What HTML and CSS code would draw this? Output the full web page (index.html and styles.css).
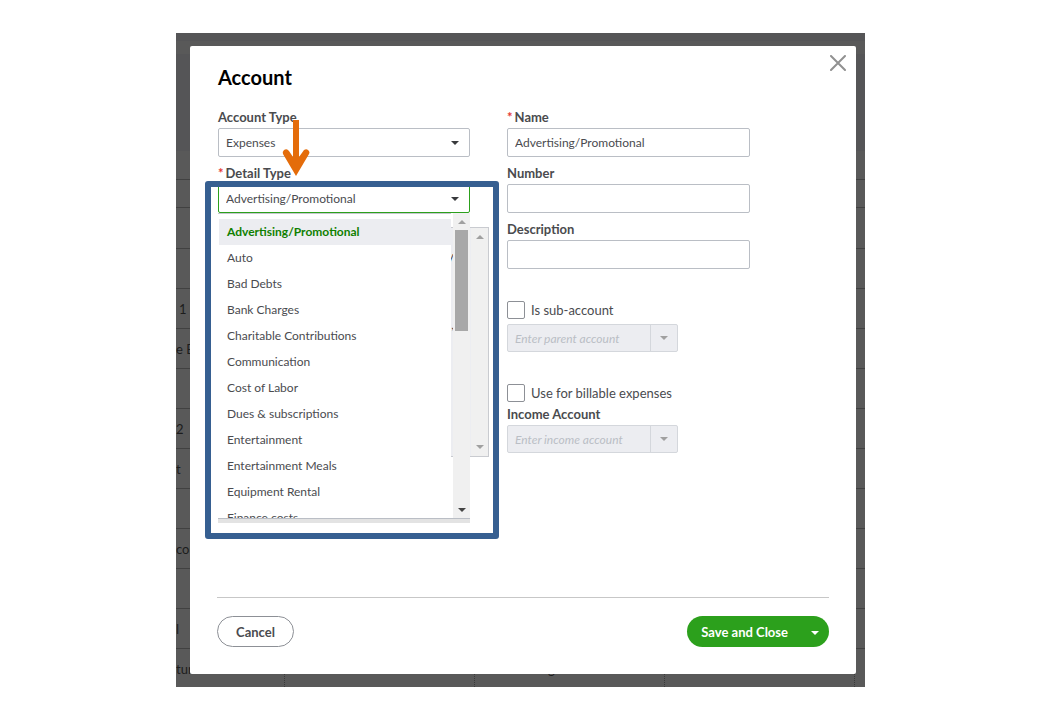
FILE: index.html
```html
<!DOCTYPE html>
<html lang="en">
<head>
    <meta charset="UTF-8">
    <meta name="viewport" content="width=device-width, initial-scale=1.0">
    <title>Account</title>
    <link rel="stylesheet" href="styles.css">
</head>
<body>
    <div class="stage">
        <!-- chart of accounts behind the dialog -->
        <div class="backdrop">
            <div class="backdrop-bar"></div>
            <div class="backdrop-head"></div>
            <table class="accounts">
                <tr class="row-head"><td></td><td></td><td></td><td></td><td></td></tr>
                <tr class="row-filter"><td></td><td></td><td></td><td></td><td></td></tr>
                <tr class="row-first"><td></td><td></td><td></td><td></td><td></td></tr>
                <tr><td></td><td></td><td></td><td></td><td></td></tr>
                <tr><td class="indent">1</td><td></td><td></td><td></td><td></td></tr>
                <tr><td>e B</td><td></td><td></td><td></td><td></td></tr>
                <tr><td></td><td></td><td></td><td></td><td></td></tr>
                <tr><td>2</td><td></td><td></td><td></td><td></td></tr>
                <tr><td>t</td><td></td><td></td><td></td><td></td></tr>
                <tr><td></td><td></td><td></td><td></td><td></td></tr>
                <tr><td>cou</td><td></td><td></td><td></td><td></td></tr>
                <tr><td></td><td></td><td></td><td></td><td></td></tr>
                <tr><td>l</td><td></td><td></td><td></td><td></td></tr>
                <tr><td>tur</td><td></td><td class="type">g</td><td></td><td></td></tr>
            </table>
        </div>

        <form class="dialog">
            <button type="button" class="close" aria-label="Close">
                <svg width="16" height="16" viewBox="0 0 16 16"><path d="M1 1L15 15M15 1L1 15" stroke="#919191" stroke-width="2" stroke-linecap="round"/></svg>
            </button>
            <h1>Account</h1>

            <div class="columns">
                <div class="left">
                    <div class="field">
                        <label for="account-type">Account Type</label>
                        <select id="account-type"><option>Expenses</option></select>
                    </div>
                    <div class="field">
                        <label for="detail-type"><span class="required">*</span>Detail Type</label>
                        <select id="detail-type" class="open"><option>Advertising/Promotional</option></select>
                        <div class="dropdown">
                            <ul class="options">
                                <li class="selected">Advertising/Promotional</li>
                                <li>Auto</li>
                                <li>Bad Debts</li>
                                <li>Bank Charges</li>
                                <li>Charitable Contributions</li>
                                <li>Communication</li>
                                <li>Cost of Labor</li>
                                <li>Dues &amp; subscriptions</li>
                                <li>Entertainment</li>
                                <li>Entertainment Meals</li>
                                <li>Equipment Rental</li>
                                <li>Finance costs</li>
                            </ul>
                            <div class="scrollbar">
                                <span class="arrow up"></span>
                                <span class="thumb"></span>
                                <span class="arrow down dark"></span>
                            </div>
                        </div>
                    </div>
                    <div class="help">
                        <div class="help-text"><p>y</p><p>,</p></div>
                        <div class="scrollbar">
                            <span class="arrow up"></span>
                            <span class="arrow down"></span>
                        </div>
                    </div>

                    <!-- callout frame and arrow -->
                    <div class="callout"></div>
                    <svg class="pointer" width="28" height="56" viewBox="0 0 28 56">
                        <path d="M11 0H17V37L22 30Q25 28 27 31Q28 33 27 34L14 56L1 34Q0 32 2 30Q5 28 7 31L11 37Z" fill="#e46c0a"/>
                    </svg>
                </div>

                <div class="right">
                    <div class="field">
                        <label for="name"><span class="required">*</span>Name</label>
                        <input type="text" id="name" value="Advertising/Promotional">
                    </div>
                    <div class="field">
                        <label for="number">Number</label>
                        <input type="text" id="number">
                    </div>
                    <div class="field">
                        <label for="description">Description</label>
                        <input type="text" id="description">
                    </div>

                    <div class="group">
                        <label class="check"><input type="checkbox">Is sub-account</label>
                        <div class="combo">
                            <input type="text" placeholder="Enter parent account" aria-label="Parent account" disabled>
                            <button type="button" aria-label="Show accounts" disabled><span class="arrow down"></span></button>
                        </div>
                    </div>
                    <div class="group">
                        <label class="check"><input type="checkbox">Use for billable expenses</label>
                        <label class="combo-label" for="income">Income Account</label>
                        <div class="combo">
                            <input type="text" id="income" placeholder="Enter income account" disabled>
                            <button type="button" aria-label="Show income accounts" disabled><span class="arrow down"></span></button>
                        </div>
                    </div>
                </div>
            </div>

            <div class="footer">
                <button type="button" class="cancel">Cancel</button>
                <div class="save">
                    <button type="button" class="save-main">Save and Close</button>
                    <button type="button" class="save-more" aria-label="More save options"><span class="arrow down"></span></button>
                </div>
            </div>
        </form>
    </div>
</body>
</html>
```

FILE: styles.css
```css
* {
    box-sizing: border-box;
}
body {
    margin: 0;
    padding: 33px 175px 33px 176px;
    background-color: #fff;
    font-family: Lato, "Open Sans", sans-serif;
    font-size: 12px;
    color: #4a4b4f;
}
input, select, button {
    font-family: inherit;
    font-size: 12px;
    color: inherit;
}
.stage {
    display: grid;
    grid-template-columns: minmax(0, 1fr);
    background-color: #595959;
}
.backdrop, .dialog {
    grid-area: 1 / 1;
}

/* Page behind */
.backdrop {
    height: 0;
    min-height: 100%;
    overflow: hidden;
}
.backdrop-bar {
    height: 8px;
    background-color: #555557;
}
.backdrop-head {
    height: 97px;
    margin-top: 13px;
    background-color: #555557;
}
.accounts {
    width: 100%;
    table-layout: fixed;
    border-collapse: separate;
    border-spacing: 0;
    color: #1c1c1c;
    font-size: 13px;
}
.accounts td {
    height: 40px;
    padding: 0;
    border-bottom: 1px solid #414141;
    border-right: 1px dotted #3a3a3a;
    width: 190px;
}
.accounts td:first-child {
    width: 109px;
}
.accounts td:last-child {
    width: 10px;
    border-right: none;
}
.accounts .row-head td {
    height: 29px;
}
.accounts .row-filter td {
    height: 28px;
}
.accounts .row-first td {
    height: 41px;
}
.accounts .indent {
    padding-left: 3px;
}
.accounts .type {
    padding-left: 73px;
}
.accounts tr:last-child td {
    border-bottom: none;
}

/* Dialog */
.dialog {
    position: relative;
    margin: 13px 9px 13px 14px;
    padding: 19px 27px 27px;
    background-color: #fff;
    border-radius: 2px;
}
.close {
    position: absolute;
    top: 9px;
    right: 10px;
    padding: 0;
    border: none;
    background: none;
    line-height: 0;
}
h1 {
    margin: 0 0 19px;
    padding-left: 1px;
    font-size: 20px;
    line-height: 24px;
    color: #000;
}
.columns {
    display: grid;
    grid-template-columns: 252fr 322fr;
    gap: 37px;
    padding-left: 1px;
}
.left {
    position: relative;
}
.field {
    position: relative;
    margin-bottom: 7px;
}
.right .field {
    max-width: 243px;
}
.field label, .combo-label {
    display: block;
    margin-bottom: 2px;
    font-size: 13px;
    font-weight: bold;
    line-height: 18px;
    color: #4a4b4e;
}
.required {
    margin-right: 2px;
    color: #e43834;
}
.field input, .field select {
    display: block;
    width: 100%;
    height: 29px;
    padding: 0 7px;
    border: 1px solid #babec5;
    border-radius: 2px;
    background-color: #fff;
}
.field select {
    appearance: none;
    background-image: url("data:image/svg+xml,%3Csvg xmlns='http://www.w3.org/2000/svg' width='8' height='4'%3E%3Cpath d='M0 0H8L4 4Z' fill='%23393a3d'/%3E%3C/svg%3E");
    background-repeat: no-repeat;
    background-position: right 10px center;
}
.field select.open {
    border-color: #2ca01c;
}

/* Triangles */
.arrow {
    width: 0;
    height: 0;
    border: 4px solid transparent;
}
.arrow.up {
    border-top: none;
    border-bottom-color: #a0a0a0;
}
.arrow.down {
    border-bottom: none;
    border-top-color: #a0a0a0;
}
.arrow.dark {
    border-top-color: #444;
}
.scrollbar {
    display: flex;
    flex-direction: column;
    align-items: center;
    width: 17px;
    padding: 7px 0;
    background-color: #f0f0f0;
}
.scrollbar .thumb {
    width: 13px;
    height: 101px;
    margin-top: 6px;
    background-color: #a8a8a8;
}
.scrollbar .down {
    margin-top: auto;
}

/* Open list of detail types */
.dropdown {
    position: absolute;
    top: 100%;
    left: 0;
    right: 0;
    z-index: 1;
    display: flex;
    justify-content: space-between;
    height: 310px;
    border-bottom: 4px solid #e3e3e3;
}
.dropdown::after {
    content: "";
    position: absolute;
    left: 0;
    right: 0;
    bottom: 0;
    border-bottom: 1px solid #babec5;
}
.options {
    flex: 1;
    margin: 0 2px 0 0;
    padding: 5px 0 0 1px;
    overflow: hidden;
    list-style: none;
    border-top: 1px solid #c5c8ce;
    background-color: #fff;
}
.options li {
    padding-left: 8px;
    line-height: 26px;
}
.options .selected {
    background-color: #ecedf1;
    font-weight: bold;
    color: #108000;
}

/* Disabled help panel */
.help {
    display: flex;
    height: 230px;
    margin: 14px -19px 0 0;
    border: 1px solid #c9cbd0;
    background-color: #ecedf1;
}
.help-text {
    flex: 1;
    padding: 20px 17px 0 0;
    text-align: right;
}
.help-text p {
    height: 69px;
    margin: 0;
}

/* Callout */
.callout {
    position: absolute;
    top: 73px;
    left: -13px;
    right: -29px;
    z-index: 2;
    height: 358px;
    border: 6px solid #365f91;
    border-radius: 3px;
}
.pointer {
    position: absolute;
    top: 12px;
    left: 64px;
    z-index: 2;
}

/* Sub-account and billable groups */
.group {
    margin-top: 32px;
}
.check {
    display: flex;
    align-items: center;
    gap: 6px;
    font-size: 13px;
    line-height: 18px;
}
.check input {
    appearance: none;
    width: 18px;
    height: 18px;
    margin: 0;
    border: 1px solid #8d9096;
    border-radius: 2px;
    background-color: #fff;
}
.combo {
    display: flex;
    max-width: 171px;
    height: 28px;
    margin-top: 5px;
    border: 1px solid #d4d7dc;
    border-radius: 2px;
    background-color: #ecedf1;
}
.combo-label {
    margin-top: 3px;
}
.combo-label + .combo {
    margin-top: 0;
}
.combo input {
    flex: 1;
    min-width: 0;
    padding: 0 7px;
    border: none;
    background: none;
    font-style: italic;
}
.combo input::placeholder {
    color: #babec5;
}
.combo button {
    display: flex;
    align-items: center;
    justify-content: center;
    width: 27px;
    padding: 0;
    border: none;
    border-left: 1px solid #d4d7dc;
    background: none;
}

/* Footer */
.footer {
    display: flex;
    justify-content: space-between;
    margin-top: 140px;
    padding-top: 18px;
    border-top: 1px solid #c7c7c7;
}
.footer button {
    height: 31px;
    font-size: 13px;
    font-weight: bold;
}
.cancel {
    width: 77px;
    padding: 0;
    border: 1px solid #8d9096;
    border-radius: 16px;
    background-color: #fff;
}
.save {
    display: flex;
}
.save button {
    border: none;
    background-color: #2ca01c;
    color: #fff;
}
.save-main {
    padding: 0 15px 0 14px;
    border-radius: 16px 0 0 16px;
}
.save-more {
    display: flex;
    align-items: center;
    width: 26px;
    padding: 3px 0 0 8px;
    border-radius: 0 16px 16px 0;
}
.save-more .arrow.down {
    border-top-color: #fff;
}
```
